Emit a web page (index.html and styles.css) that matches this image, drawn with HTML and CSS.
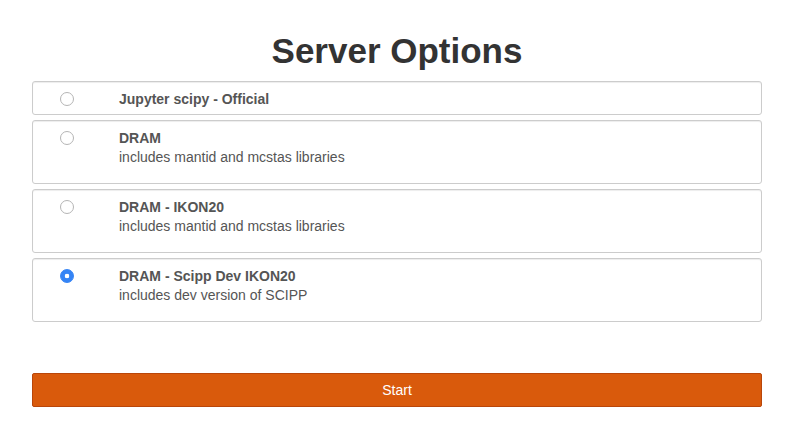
FILE: index.html
```html
<!DOCTYPE html>
<html lang="en">
<head>
<meta charset="utf-8">
<title>Server Options</title>
<link rel="stylesheet" href="styles.css">
</head>
<body>
<main class="page">
  <h1 class="title">Server Options</h1>
  <form class="options">
    <label class="option">
      <input class="radio" type="radio" name="profile" value="scipy">
      <span class="option-text">
        <strong class="option-name">Jupyter scipy - Official</strong>
      </span>
    </label>
    <label class="option">
      <input class="radio" type="radio" name="profile" value="dram">
      <span class="option-text">
        <strong class="option-name">DRAM</strong>
        <span class="option-desc">includes mantid and mcstas libraries</span>
      </span>
    </label>
    <label class="option">
      <input class="radio" type="radio" name="profile" value="dram-ikon20">
      <span class="option-text">
        <strong class="option-name">DRAM - IKON20</strong>
        <span class="option-desc">includes mantid and mcstas libraries</span>
      </span>
    </label>
    <label class="option">
      <input class="radio" type="radio" name="profile" value="dram-scipp" checked>
      <span class="option-text">
        <strong class="option-name">DRAM - Scipp Dev IKON20</strong>
        <span class="option-desc">includes dev version of SCIPP</span>
      </span>
    </label>
    <button class="start" type="button">Start</button>
  </form>
</main>
</body>
</html>
```

FILE: styles.css
```css
html, body {
  margin: 0;
  padding: 0;
  background: #fff;
}

body {
  font-family: "Liberation Sans", Arial, Helvetica, sans-serif;
  font-size: 14px;
  color: #555;
}

.page {
  width: 730px;
  padding: 31px 0 0 32px;
}

.title {
  margin: 0 0 10px;
  font-size: 35px;
  line-height: 40px;
  font-weight: bold;
  color: #333;
  text-align: center;
}

.options {
  display: flex;
  flex-direction: column;
  gap: 5px;
  margin: 0;
}

.option {
  display: flex;
  align-items: flex-start;
  gap: 45px;
  padding: 7px 12px 5px 27px;
  border: 1px solid #ccc;
  border-radius: 3px;
  box-shadow: inset 0 1px 1px rgba(0, 0, 0, 0.075);
  background: #fff;
  cursor: pointer;
}

.radio {
  appearance: none;
  -webkit-appearance: none;
  flex: none;
  width: 14px;
  height: 14px;
  margin: 3px 0 0;
  border: 1px solid #b5b5b5;
  border-radius: 50%;
  background: #fff;
  box-sizing: border-box;
}

.radio:checked {
  border-color: #3584f5;
  background: radial-gradient(circle, #fff 0 2px, #3584f5 2.6px);
}

.option-text {
  display: flex;
  flex-direction: column;
}

.option-name {
  font-weight: bold;
  line-height: 20px;
  color: #555;
}

.option-desc {
  line-height: 19px;
  margin-bottom: 11px;
}

.start {
  margin-top: 46px;
  height: 34px;
  width: 100%;
  padding: 6px 12px;
  border: 1px solid #b9460a;
  border-radius: 2px;
  background: #d95a0c;
  color: #fff;
  font-family: "Liberation Sans", Arial, Helvetica, sans-serif;
  font-size: 14px;
  line-height: 20px;
  cursor: pointer;
}
```
